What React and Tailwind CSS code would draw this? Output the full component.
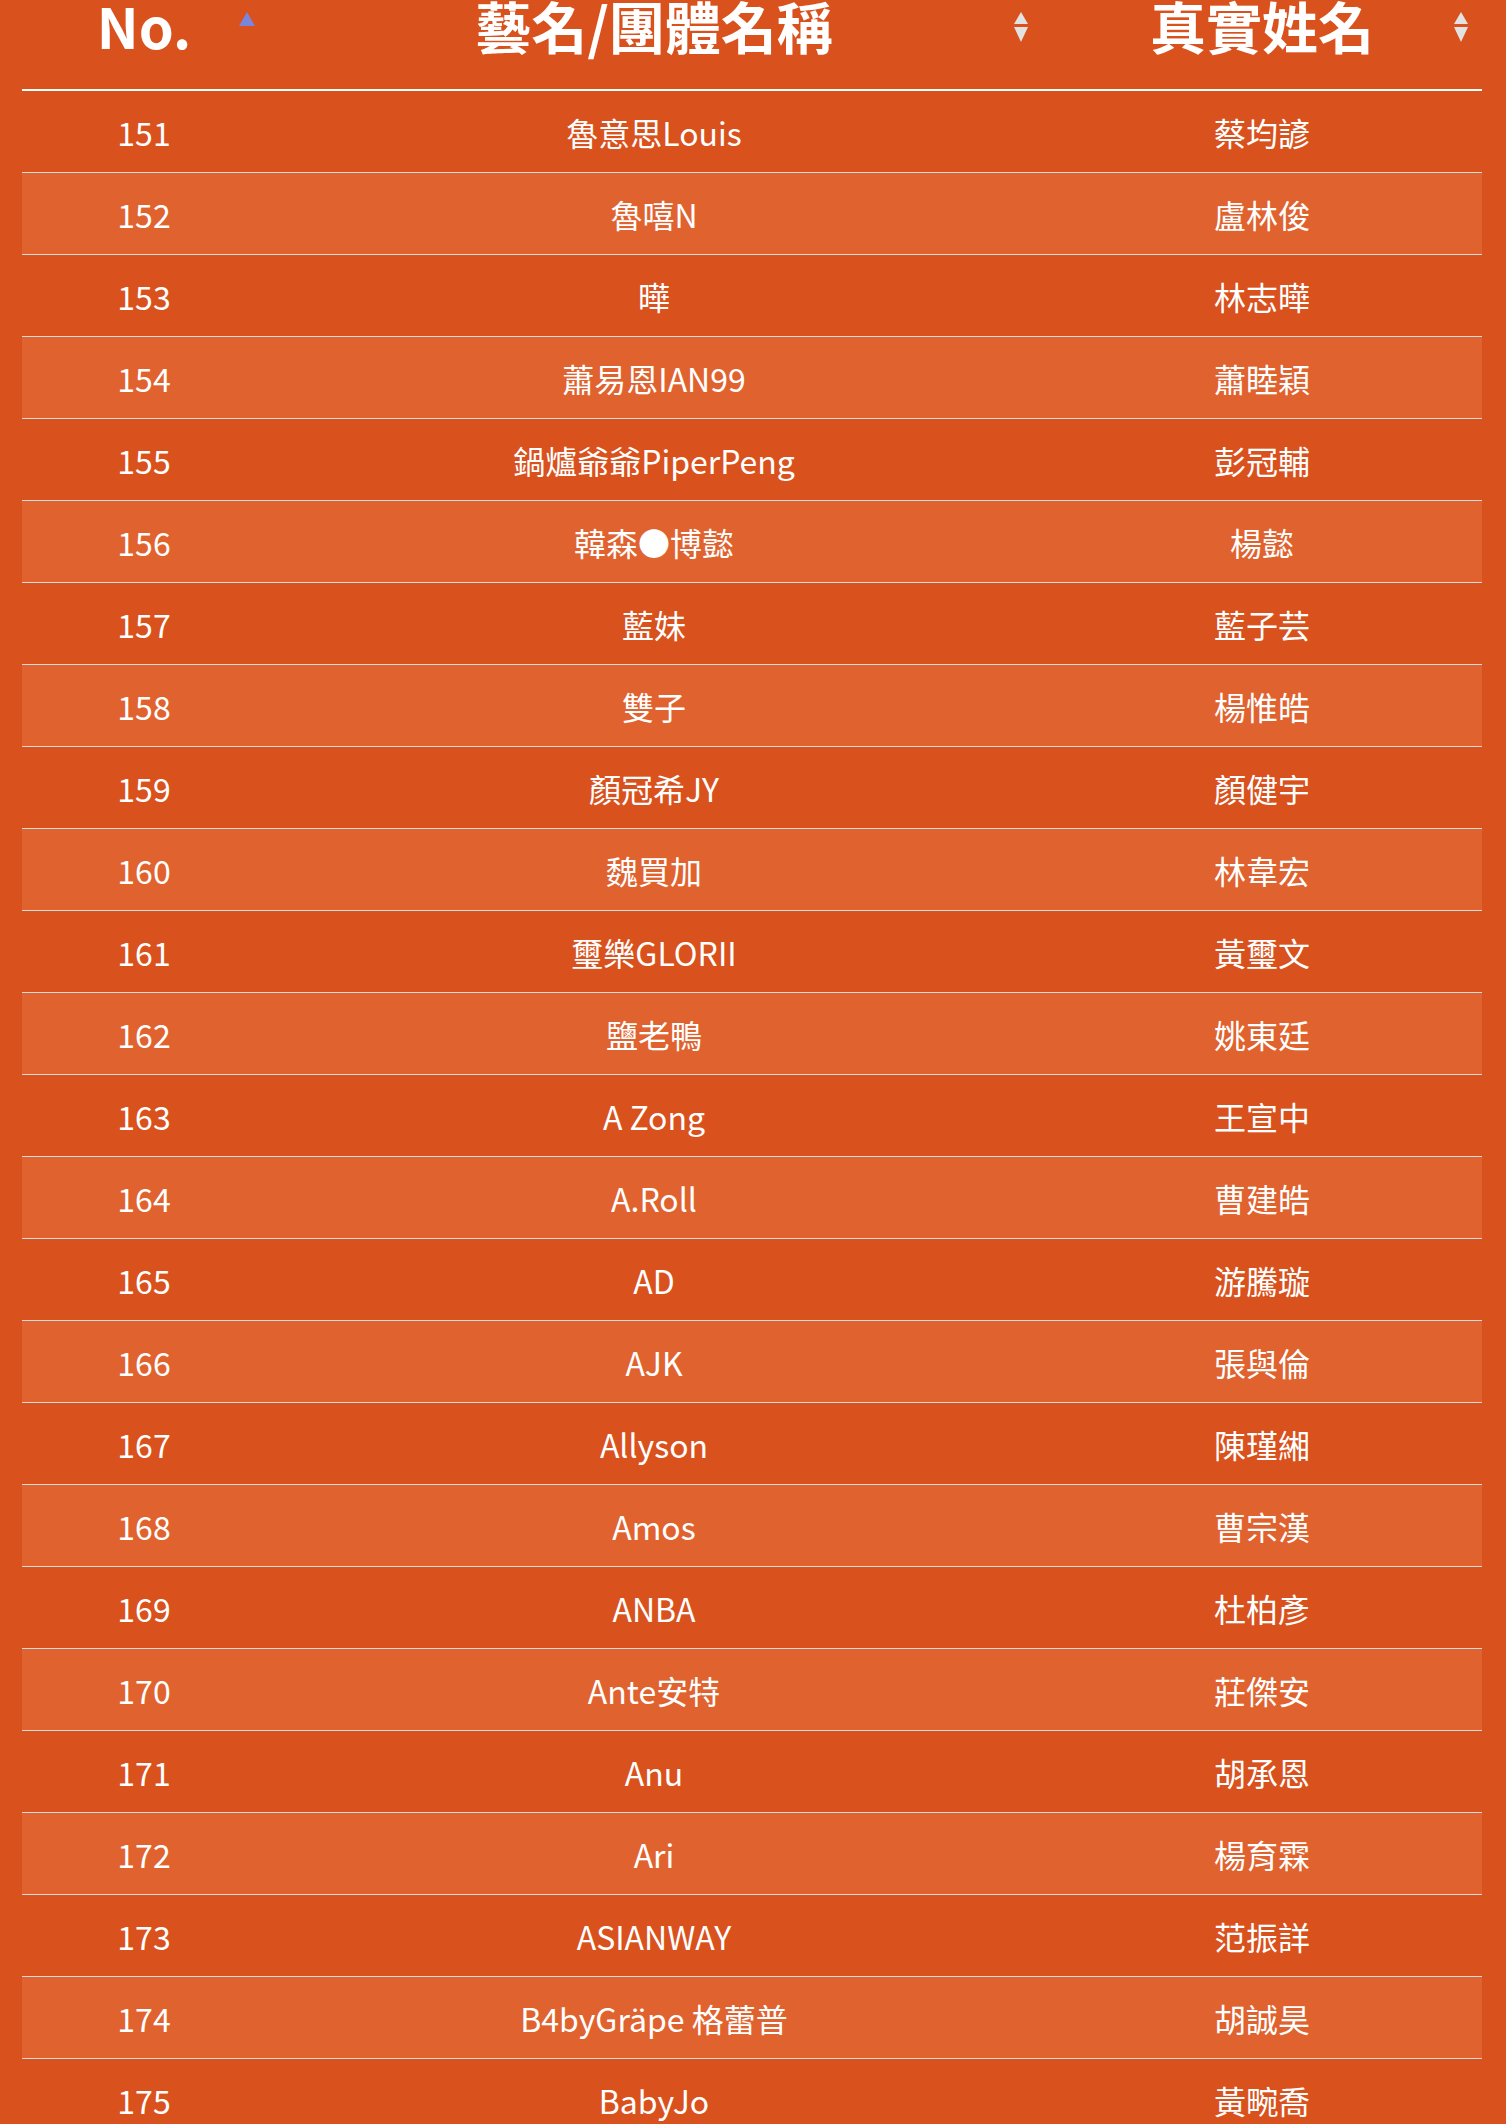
import React from "react";

const rows = [
  [151, "魯意思Louis", "蔡均諺"],
  [152, "魯嘻N", "盧林俊"],
  [153, "曄", "林志曄"],
  [154, "蕭易恩IAN99", "蕭睦穎"],
  [155, "鍋爐爺爺PiperPeng", "彭冠輔"],
  [156, "韓森●博懿", "楊懿"],
  [157, "藍妹", "藍子芸"],
  [158, "雙子", "楊惟皓"],
  [159, "顏冠希JY", "顏健宇"],
  [160, "魏買加", "林韋宏"],
  [161, "璽樂GLORII", "黃璽文"],
  [162, "鹽老鴨", "姚東廷"],
  [163, "A Zong", "王宣中"],
  [164, "A.Roll", "曹建皓"],
  [165, "AD", "游騰璇"],
  [166, "AJK", "張與倫"],
  [167, "Allyson", "陳瑾緗"],
  [168, "Amos", "曹宗漢"],
  [169, "ANBA", "杜柏彥"],
  [170, "Ante安特", "莊傑安"],
  [171, "Anu", "胡承恩"],
  [172, "Ari", "楊育霖"],
  [173, "ASIANWAY", "范振詳"],
  [174, "B4byGräpe 格蕾普", "胡誠昊"],
  [175, "BabyJo", "黃畹喬"],
];

const SortAsc = () => (
  <svg width="16" height="30" viewBox="0 0 16 30" className="absolute right-[11px] top-[12px]">
    <polygon points="8,0 16,14 0,14" fill="#7b86db" />
  </svg>
);

const SortBoth = () => (
  <svg width="14" height="30" viewBox="0 0 14 30" className="absolute right-[14px] top-[12px]">
    <polygon points="7,0 14,12 0,12" fill="#e2e2e2" />
    <polygon points="0,15 14,15 7,30" fill="#e2e2e2" />
  </svg>
);

const HeadCell = ({ w, children, icon }) => (
  <div className={`relative ${w} flex justify-center items-start`}>
    <span className="text-[56px] leading-[50px] font-bold text-white">{children}</span>
    {icon}
  </div>
);

export default function App() {
  return (
    <div
      className="min-h-screen bg-[#d9511d] px-[22px] overflow-hidden"
      style={{ fontFamily: '"Noto Sans CJK TC", "Noto Sans", sans-serif' }}
    >
      <div className="w-[1460px]">
        <div className="flex h-[91px] border-b-2 border-white">
          <HeadCell w="w-[244px]" icon={<SortAsc />}>No.</HeadCell>
          <HeadCell w="w-[776px]" icon={<SortBoth />}>藝名/團體名稱</HeadCell>
          <HeadCell w="w-[440px]" icon={<SortBoth />}>真實姓名</HeadCell>
        </div>
        {rows.map(([no, name, real], i) => (
          <div
            key={no}
            className={`flex h-[82px] items-center border-b-[1.5px] border-[#dcdcdc] text-white text-[32px] font-normal ${
              i % 2 === 1 ? "bg-[#e0632f]" : ""
            }`}
          >
            <div className="w-[244px] text-center">{no}</div>
            <div className="w-[776px] text-center">{name}</div>
            <div className="w-[440px] text-center">{real}</div>
          </div>
        ))}
      </div>
    </div>
  );
}
